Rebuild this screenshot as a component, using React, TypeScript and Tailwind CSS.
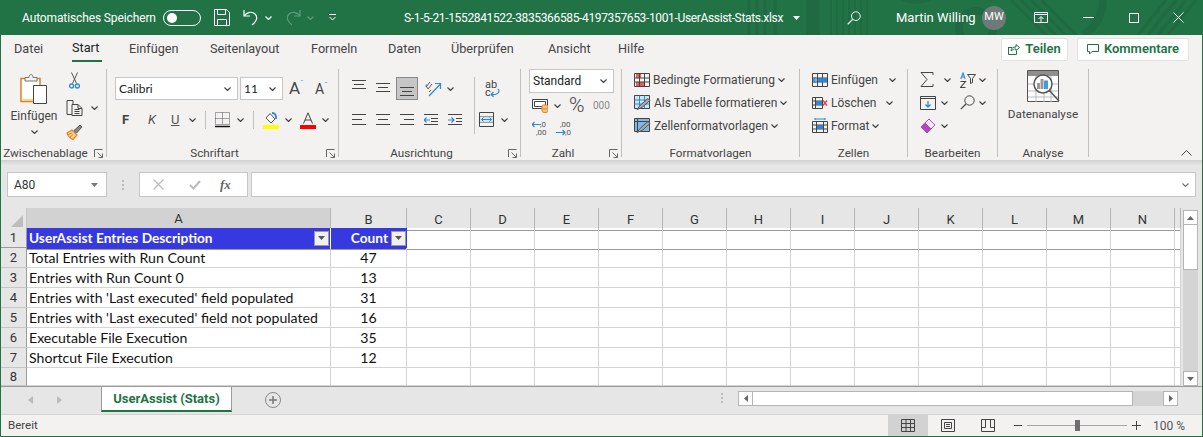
import type { ReactNode } from "react";

const ui = "font-['Roboto','Noto_Sans',sans-serif]";
const cellFont = "font-['Lato','Open_Sans',sans-serif]";

// --- small icons ---
function Chev({ className = "text-[#444]" }: { className?: string }) {
  return (
    <svg width="7" height="4" viewBox="0 0 7 4" className={`flex-none ${className}`} fill="none" stroke="currentColor" strokeWidth="1.2">
      <path d="M.5.5l3 3 3-3" />
    </svg>
  );
}

function Launcher() {
  return (
    <svg width="9" height="9" viewBox="0 0 9 9" fill="none" stroke="#666" className="flex-none">
      <path d="M.5 8V.5H8.500M3.500 3.500l4.500 4.500M8.500 4.500v4h-4" />
    </svg>
  );
}

// alignment glyph: three lines, each [from, to], starting at y offset with a fixed step
function Lines({ rows, offset = 0.5, step = 4 }: { rows: [number, number][]; offset?: number; step?: number }) {
  return (
    <svg width="14" height="17" viewBox="0 0 14 17" stroke="#444" className="flex-none">
      {rows.map(([a, b], i) => (
        <path key={i} d={`M${a} ${i * step + offset}H${b}`} />
      ))}
    </svg>
  );
}

function PasteIcon() {
  return (
    <svg width="28" height="32" viewBox="0 0 28 32" fill="none" className="flex-none">
      <path d="M1 5.500h19v23H1z" fill="#fff" stroke="#e67e22" strokeWidth="1.500" />
      <path d="M2.500 27h17" stroke="#fbd28b" strokeWidth="2" />
      <path d="M5 4.500h4c0-4 4-4 4 0h4v3.500H5z" fill="#f3f2f1" stroke="#777" />
      <path d="M13.500 12.500h13v18h-13z" fill="#fff" stroke="#444" />
    </svg>
  );
}

function CutIcon() {
  return (
    <svg width="11" height="17" viewBox="0 0 11 17" fill="none" className="flex-none">
      <path d="M2.500.5l5 11M8.500.5l-5 11" stroke="#555" />
      <circle cx="2.600" cy="14" r="2" stroke="#2b88d8" strokeWidth="1.300" />
      <circle cx="8.400" cy="14" r="2" stroke="#2b88d8" strokeWidth="1.300" />
    </svg>
  );
}

function CopyIcon() {
  return (
    <svg width="17" height="16" viewBox="0 0 17 16" fill="none" stroke="#444" className="flex-none">
      <path d="M1 .5h6v14H1z" />
      <path d="M6 4.500h6l4 4v7H6z" fill="#f3f2f1" />
      <path d="M12 4.500v4h4M8.500 9.500h5M8.500 11.500h5M8.500 13.500h5" />
    </svg>
  );
}

function BrushIcon() {
  return (
    <svg width="17" height="16" viewBox="0 0 17 16" fill="none" className="flex-none">
      <path d="M1 9l5-3 5 5-4 4.500C5 15 1.500 12 1 9z" fill="#fbd28b" stroke="#e67e22" strokeWidth="1.200" />
      <path d="M2 10.500l4-1.500M4 13l3-2.500" stroke="#e67e22" />
      <path d="M8 6.500l6-5.500 2 2-5.500 6z" fill="#888" stroke="#555" />
    </svg>
  );
}

function BorderIcon() {
  return (
    <svg width="15" height="16" viewBox="0 0 15 16" fill="none" className="flex-none">
      <path d="M.5.500h14v12H.5zM7.500.5v12M.5 6.500h14" stroke="#555" strokeDasharray="1 1" />
      <path d="M0 14.500h15" stroke="#111" strokeWidth="1.500" />
    </svg>
  );
}

function FillIcon() {
  return (
    <svg width="16" height="17" viewBox="0 0 16 17" fill="none" className="flex-none">
      <path d="M3 6l4-4.500L12 7l-4 4z" stroke="#555" fill="#fff" />
      <path d="M9 1c3 0 4.500 2 4 6" stroke="#2b88d8" strokeWidth="1.800" />
      <rect y="13" width="16" height="4" fill="#ffff00" />
    </svg>
  );
}

function FontColorIcon() {
  return (
    <svg width="16" height="17" viewBox="0 0 16 17" fill="none" className="flex-none">
      <path d="M3.500 11.500L8 .8l4.500 10.700M5 8h6" stroke="#444" />
      <rect y="13" width="16" height="4" fill="#ff0000" />
    </svg>
  );
}

function RotateIcon() {
  return (
    <svg width="17" height="16" viewBox="0 0 17 16" fill="none" className="flex-none">
      <path d="M1 6l4-5M3 8l4-5M1.500 3.500c-1 1.500 0 3 1.500 4M4 11l2-2" stroke="#555" />
      <path d="M4 15L15 3.500M10 2.500h5.500V8" stroke="#2b88d8" strokeWidth="1.200" />
    </svg>
  );
}

function IndentIcon({ flip }: { flip?: boolean }) {
  return (
    <svg width="14" height="13" viewBox="0 0 14 13" fill="none" className="flex-none">
      <path d={flip ? "M0 1.500h14M8 5.500h6M8 8.500h6M0 11.500h14" : "M0 1.500h14M7 5.500h7M7 8.500h7M0 11.500h14"} stroke="#444" />
      <path d={flip ? "M0 7h6M3.500 4.500L6 7 3.500 9.500" : "M6 7H0M2.500 4.500L0 7l2.500 2.500"} stroke="#2b88d8" strokeWidth="1.200" />
    </svg>
  );
}

function WrapIcon() {
  return (
    <svg width="16" height="18" viewBox="0 0 16 18" fill="none" className="flex-none overflow-visible">
      <text x="1" y="8" fontSize="11" fill="#444" fontFamily="Roboto">ab</text>
      <text x="1" y="16" fontSize="11" fill="#444" fontFamily="Roboto">c</text>
      <path d="M7 14.500c4 .5 8-.5 8-3.500 0-1.500-.8-2-1.500-2M7 14.500L9.500 12M7 14.500l2.500 2.200" stroke="#2b88d8" strokeWidth="1.200" />
    </svg>
  );
}

function MergeIcon() {
  return (
    <svg width="15" height="15" viewBox="0 0 15 15" fill="none" className="flex-none">
      <path d="M.5.500h14v14H.5zM.5 5h14M.5 10h14" stroke="#444" />
      <rect x="1" y="5" width="13" height="5" fill="#cfe5f6" />
      <path d="M2.500 7.500h10M4.500 5.500l-2 2 2 2M10.500 5.500l2 2-2 2" stroke="#2b88d8" />
    </svg>
  );
}

function AccountingIcon() {
  return (
    <svg width="16" height="15" viewBox="0 0 16 15" fill="none" className="flex-none">
      <path d="M.5 1.500h15v9H.5z" stroke="#444" fill="#fff" />
      <path d="M2.500 3.500h11v5h-11z" stroke="#444" />
      <path d="M10 8c0-1.500 6-1.500 6 0v5c0 2-6 2-6 0z" fill="#f6c489" stroke="#e67e22" />
      <path d="M10 10c1 1.300 5 1.300 6 0" stroke="#e67e22" />
    </svg>
  );
}

function DecimalIcon({ more }: { more?: boolean }) {
  return (
    <svg width="17" height="17" viewBox="0 0 17 17" fill="none" className="flex-none">
      <path d={more ? "M0 12.500h9M6.500 10l2.500 2.500L6.500 15" : "M9 4.500H0M2.500 2L0 4.500 2.500 7"} stroke="#2b88d8" strokeWidth="1.200" />
      <text x={more ? 4 : 8} y="7" fontSize="8" fill="#555" fontFamily="Roboto">{more ? ",00" : ",0"}</text>
      <text x={more ? 9 : 4} y="15" fontSize="8" fill="#555" fontFamily="Roboto">{more ? ",0" : ",00"}</text>
    </svg>
  );
}

function CondFormatIcon() {
  return (
    <svg width="16" height="14" viewBox="0 0 16 14" fill="none" className="flex-none">
      <rect x="2" y="1" width="5" height="4" fill="#e8605d" />
      <rect x="2" y="9" width="9" height="4" fill="#e8605d" />
      <path d="M.5.500h15v13H.5zM5.500.5v13M10.500.5v13M.5 5h15M.5 9h15" stroke="#444" />
    </svg>
  );
}

function TableFormatIcon({ full }: { full?: boolean }) {
  return (
    <svg width="17" height="15" viewBox="0 0 17 15" fill="none" className="flex-none">
      <rect x="1" y="1" width="15" height="13" fill={full ? "#7fb8e6" : "#cfe5f6"} />
      <path d="M.5.500h15v13H.5z" stroke="#444" />
      <path d={full ? "M.5 3.500h15M3.500.5v13" : "M.5 5h15M.5 9h15M5.500.5v13M10.500.5v13"} stroke={full ? "#444" : "#2b88d8"} />
      <path d="M3 14.500l3-4 8-7 2 2-8 7z" fill="#aaa" stroke="#555" />
    </svg>
  );
}

function InsertCellsIcon() {
  return (
    <svg width="16" height="14" viewBox="0 0 16 14" fill="none" className="flex-none">
      <path d="M.5.500h15v13H.5zM.5 5h15M.5 9h15M5.500.5v13M10.500.5v13" stroke="#444" />
      <rect x="6" y="5" width="9" height="4" fill="#2b88d8" />
      <path d="M8 7H1M3.500 4.500L1 7l2.500 2.500" stroke="#2b88d8" fill="none" strokeWidth="1.200" />
    </svg>
  );
}

function DeleteCellsIcon() {
  return (
    <svg width="16" height="14" viewBox="0 0 16 14" fill="none" className="flex-none">
      <path d="M.5 1.500h10v11H.5zM.5 5h10M.5 9h10M3.500 1.500v11" stroke="#444" />
      <rect x="4" y="5" width="6" height="4" fill="#2b88d8" />
      <path d="M11 4.500l4 5M15 4.500l-4 5" stroke="#e8423f" strokeWidth="1.400" />
    </svg>
  );
}

function FormatCellsIcon() {
  return (
    <svg width="16" height="15" viewBox="0 0 16 15" fill="none" className="flex-none">
      <path d="M.5 3.500h15v11H.5zM.5 7h15M.5 11h15M4.500 3.500v11M11.500 3.500v11" stroke="#444" />
      <rect x="5" y="7" width="6" height="4" fill="#2b88d8" />
      <path d="M3 1h10M3 0v2M13 0v2" stroke="#2b88d8" />
    </svg>
  );
}

function SumIcon() {
  return (
    <svg width="14" height="15" viewBox="0 0 14 15" fill="none" className="flex-none">
      <path d="M13 3V.5H1l6 7-6 7h12V12" stroke="#444" />
    </svg>
  );
}

function SortIcon() {
  return (
    <svg width="16" height="16" viewBox="0 0 16 16" fill="none" className="flex-none">
      <path d="M.8 7L3 1l2.200 6M1.600 5h2.800" stroke="#2b88d8" strokeWidth="1.100" />
      <path d="M.5 9.500h5l-5 6h5" stroke="#444" strokeWidth="1.100" />
      <path d="M7.500 2.500h8l-3 4v4l-2 1v-5z" stroke="#444" />
    </svg>
  );
}

function FillDownIcon() {
  return (
    <svg width="16" height="14" viewBox="0 0 16 14" fill="none" className="flex-none">
      <path d="M.5.500h15v13H.5z" stroke="#444" />
      <path d="M.5 2.500h15" stroke="#444" />
      <path d="M8 5v6M5.500 8.500L8 11l2.500-2.500" stroke="#2b88d8" strokeWidth="1.300" />
    </svg>
  );
}

function SearchIcon({ color = "#444", size = 15 }: { color?: string; size?: number }) {
  return (
    <svg width={size} height={size} viewBox="0 0 15 15" fill="none" className="flex-none">
      <circle cx="9.500" cy="5.500" r="4.700" stroke={color} />
      <path d="M6 9L.8 14.200" stroke={color} strokeWidth="1.200" />
    </svg>
  );
}

function EraserIcon() {
  return (
    <svg width="16" height="16" viewBox="0 0 16 16" fill="none" className="flex-none">
      <path d="M1 9l8-8 6 6-8 8z" fill="#f7eaf7" stroke="#b146c2" />
      <path d="M1 9l4-4 6 6-4 4z" fill="#b146c2" stroke="#b146c2" />
    </svg>
  );
}

function AnalyzeIcon() {
  return (
    <svg width="33" height="33" viewBox="0 0 33 33" fill="none" className="flex-none">
      <path d="M.5.500h31v31H.5z" fill="#fff" stroke="#555" />
      <rect x="1" y="1" width="30" height="5" fill="#8f8f8f" />
      <path d="M1 14h30M1 21h30M1 27h30M9 6v26M17 6v26M24 6v26" stroke="#bbb" />
      <circle cx="16" cy="14" r="9" fill="#fff" stroke="#555" strokeWidth="1.500" />
      <rect x="10" y="13" width="3" height="6" fill="#999" />
      <rect x="13.500" y="9" width="3" height="10" fill="#999" />
      <rect x="17" y="10.500" width="4" height="8.500" fill="#3f9ce0" />
      <path d="M22.500 20.500L32 31" stroke="#555" strokeWidth="1.500" />
    </svg>
  );
}

// --- ribbon group ---
function Group({ width, label, launcher, children }: { width: string; label: string; launcher?: boolean; children: ReactNode }) {
  return (
    <div className={`flex h-full flex-none ${width}`}>
      <div className="flex min-w-0 flex-1 flex-col">
        <div className="h-[84px] min-h-0">{children}</div>
        <div className="flex h-[13px] items-center text-[11.7px] leading-none text-[#444]">
          <span className="flex-1 text-center whitespace-nowrap">{label}</span>
          {launcher && (
            <span className="flex w-[16px] flex-none justify-start pl-[4px]">
              <Launcher />
            </span>
          )}
        </div>
      </div>
      <div className="mt-[6px] mb-[3px] w-px flex-none bg-[#c2c0be]" />
    </div>
  );
}

function StyleRow({ icon, label, gap = "ml-[3px]", chev = "ml-[3px]" }: { icon: ReactNode; label: string; gap?: string; chev?: string }) {
  return (
    <div className="flex h-[23px] items-center">
      {icon}
      <span className={`${gap} text-[12px] whitespace-nowrap text-[#444]`}>{label}</span>
      <span className={chev}>
        <Chev />
      </span>
    </div>
  );
}

function Ribbon() {
  return (
    <div className={`flex h-[97px] flex-none bg-[#f3f2f1] ${ui}`}>
      <Group width="w-[106px]" label="Zwischenablage" launcher>
        <div className="flex h-full">
          <div className="flex w-[65px] flex-none flex-col items-center pt-[10px] pl-[1px]">
            <PasteIcon />
            <span className="mt-[3px] text-[12px] leading-[16px] text-[#444]">Einfügen</span>
            <span className="mt-[6px]"><Chev /></span>
          </div>
          <div className="flex flex-col pt-[9px]">
            <span className="ml-[3px] h-[24px]"><CutIcon /></span>
            <span className="flex h-[24px] items-center"><CopyIcon /><span className="ml-[8px]"><Chev /></span></span>
            <span className="flex h-[24px] items-center"><BrushIcon /></span>
          </div>
        </div>
      </Group>

      <Group width="w-[232px]" label="Schriftart" launcher>
        <div className="flex flex-col pt-[14px] pl-[8px]">
          <div className="flex items-center">
            <div className={`flex h-[23px] w-[123px] items-center justify-between border border-[#c6c6c6] bg-white pr-[6px] pl-[3px] text-[12px] text-[#222] ${cellFont}`}>
              Calibri <Chev />
            </div>
            <div className={`ml-[2px] flex h-[23px] w-[43px] items-center justify-between border border-[#c6c6c6] bg-white pr-[6px] pl-[3px] text-[12px] text-[#222] ${cellFont}`}>
              11 <Chev />
            </div>
            <span className="ml-[6px] flex w-[24px] items-start text-[17px] leading-none text-[#444]">A<span className="text-[8px] leading-none text-[#2b88d8]">ˆ</span></span>
            <span className="ml-[2px] flex items-start text-[14px] leading-none text-[#444]">A<span className="text-[8px] leading-none text-[#2b88d8]">ˇ</span></span>
          </div>
          <div className="mt-[11px] flex h-[18px] items-center">
            <span className="ml-[7px] w-[26px] text-[13px] font-bold text-[#444]">F</span>
            <span className="w-[23px] text-[13px] text-[#555] italic">K</span>
            <span className="w-[18px] text-[13px] text-[#555] underline">U</span>
            <Chev />
            <span className="mx-[9px] h-[18px] w-px bg-[#c2c0be]" />
            <BorderIcon />
            <span className="ml-[7px]"><Chev /></span>
            <span className="mx-[9px] h-[18px] w-px bg-[#c2c0be]" />
            <FillIcon />
            <span className="ml-[6px]"><Chev /></span>
            <span className="ml-[8px]"><FontColorIcon /></span>
            <span className="ml-[6px]"><Chev /></span>
          </div>
        </div>
      </Group>

      <Group width="w-[182px]" label="Ausrichtung" launcher>
        <div className="flex flex-col pt-[14px] pl-[13px]">
          <div className="flex h-[23px] items-center">
            <Lines rows={[[0, 14], [2, 12], [0, 14]]} />
            <span className="ml-[10px]"><Lines offset={3.5} rows={[[0, 14], [2, 12], [0, 14]]} /></span>
            <span className="ml-[6px] flex h-[23px] w-[22px] items-center justify-center border border-[#8a8a8a] bg-[#c6c6c6]">
              <Lines offset={7.5} rows={[[0, 14], [2, 12], [0, 14]]} />
            </span>
            <span className="ml-[7px]"><RotateIcon /></span>
            <span className="ml-[5px]"><Chev /></span>
            <span className="ml-[20px] h-[57px] w-px self-start bg-[#c2c0be]" />
            <span className="ml-[9px]"><WrapIcon /></span>
          </div>
          <div className="mt-[7px] flex h-[25px] items-center">
            <Lines offset={3.5} step={5} rows={[[0, 14], [0, 10], [0, 14]]} />
            <span className="ml-[10px]"><Lines offset={3.5} step={5} rows={[[0, 14], [2, 12], [0, 14]]} /></span>
            <span className="ml-[10px]"><Lines offset={3.5} step={5} rows={[[0, 14], [4, 14], [0, 14]]} /></span>
            <span className="ml-[10px]"><IndentIcon /></span>
            <span className="ml-[10px]"><IndentIcon flip /></span>
            <span className="ml-[17px]"><MergeIcon /></span>
            <span className="ml-[7px]"><Chev /></span>
          </div>
        </div>
      </Group>

      <Group width="w-[101px]" label="Zahl" launcher>
        <div className="flex flex-col pt-[6px] pl-[8px]">
          <div className="flex h-[24px] w-[85px] items-center justify-between border border-[#c6c6c6] bg-white pr-[6px] pl-[3px] text-[12px] text-[#222]">
            Standard <Chev />
          </div>
          <div className="mt-[1px] flex h-[23px] items-center pl-[3px]">
            <AccountingIcon />
            <span className="ml-[6px]"><Chev /></span>
            <span className="ml-[8px] w-[24px] text-[21px] leading-none font-light text-[#444]">%</span>
            <span className="text-[10px] text-[#888]">000</span>
          </div>
          <div className="flex h-[22px] items-center pl-[3px]">
            <DecimalIcon />
            <span className="ml-[7px]"><DecimalIcon more /></span>
          </div>
        </div>
      </Group>

      <Group width="w-[178px]" label="Formatvorlagen">
        <div className="flex flex-col pt-[5px] pl-[12px]">
          <StyleRow icon={<CondFormatIcon />} label="Bedingte Formatierung" />
          <StyleRow icon={<TableFormatIcon />} label="Als Tabelle formatieren" />
          <StyleRow icon={<TableFormatIcon full />} label="Zellenformatvorlagen" />
        </div>
      </Group>

      <Group width="w-[108px]" label="Zellen">
        <div className="flex flex-col pt-[5px] pl-[12px]">
          <StyleRow icon={<InsertCellsIcon />} label="Einfügen" chev="ml-[11px]" />
          <StyleRow icon={<DeleteCellsIcon />} label="Löschen" chev="ml-[10px]" />
          <StyleRow icon={<FormatCellsIcon />} label="Format" />
        </div>
      </Group>

      <Group width="w-[90px]" label="Bearbeiten">
        <div className="grid grid-cols-[38px_1fr] pt-[5px] pl-[12px]">
          <span className="flex h-[23px] items-center"><SumIcon /><span className="ml-[10px]"><Chev /></span></span>
          <span className="flex h-[23px] items-center pl-[2px]"><SortIcon /><span className="ml-[3px]"><Chev /></span></span>
          <span className="flex h-[23px] items-center"><FillDownIcon /><span className="ml-[5px]"><Chev /></span></span>
          <span className="flex h-[23px] items-center pl-[2px]"><SearchIcon /><span className="ml-[4px]"><Chev /></span></span>
          <span className="flex h-[23px] items-center"><EraserIcon /><span className="ml-[5px]"><Chev /></span></span>
        </div>
      </Group>

      <Group width="w-[91px]" label="Analyse">
        <div className="flex flex-col items-center pt-[7px]">
          <AnalyzeIcon />
          <span className="mt-[3px] text-[11.7px] leading-[16px] text-[#444]">Datenanalyse</span>
        </div>
      </Group>

      <div className="flex flex-1 items-end justify-end pr-[10px] pb-[4px]">
        <svg width="11" height="6" viewBox="0 0 11 6" fill="none" stroke="#444"><path d="M.5 5.500l5-5 5 5" /></svg>
      </div>
    </div>
  );
}

// --- title bar ---
function TitleBar() {
  return (
    <div className={`relative flex h-[35px] flex-none items-center overflow-hidden bg-[#217346] text-[12px] text-white ${ui}`}>
      <svg className="absolute top-0 left-[740px]" width="461" height="35" viewBox="0 0 461 35" fill="none" stroke="#1f6a40">
        <path d="M8 0v35M16 0v35M24 0v35M34 0v35" strokeWidth="3" />
        <path d="M72 0v35" strokeWidth="13" />
        <path d="M90 0v35M96 0v35M102 0v35M108 0v35M114 0v35M120 0v35M126 0v35" strokeWidth="2" />
        <path d="M160 -6a26 26 0 0 0 30 0" strokeWidth="10" />
        <circle cx="235" cy="28" r="17" strokeWidth="8" />
        <path d="M270 0l36 36M280 0l36 36M290 0l36 36M300 0l36 36" strokeWidth="3" />
        <path d="M362 0c0 15-8 28-20 35" strokeWidth="8" />
        <path d="M425 0l-28 35M435 0l-28 35M445 0l-28 35M455 0l-28 35" strokeWidth="3" />
      </svg>
      <div className="relative flex w-full items-center">
        <span className="ml-[21px] w-[141px] flex-none tracking-[-0.12px] whitespace-nowrap">Automatisches Speichern</span>
        <span className="flex h-[16px] w-[38px] flex-none items-center rounded-full border border-white pl-[3px]">
          <span className="h-[10px] w-[10px] rounded-full bg-white" />
        </span>
        <svg className="ml-[13px] flex-none" width="16" height="17" viewBox="0 0 16 17" fill="none" stroke="#fff">
          <path d="M.5.500h12l3 3v13H.5zM3.500.5v5h8v-5M3.500 16.500v-6h9v6" />
        </svg>
        <svg className="ml-[13px] flex-none" width="16" height="17" viewBox="0 0 16 17" fill="none" stroke="#fff" strokeWidth="1.200">
          <path d="M1 1v6h6M1 7c3-4 8-5 11-2 3 3 2 7-3 11" />
        </svg>
        <span className="ml-[6px]"><Chev className="text-white" /></span>
        <svg className="ml-[13px] flex-none" width="16" height="17" viewBox="0 0 16 17" fill="none" stroke="#5f9b7d" strokeWidth="1.200">
          <path d="M15 1v6H9M15 7c-3-4-8-5-11-2-3 3-2 7 3 11" />
        </svg>
        <span className="ml-[6px]"><Chev className="text-[#5f9b7d]" /></span>
        <svg className="ml-[15px] flex-none" width="7" height="7" viewBox="0 0 7 7" fill="none" stroke="#fff">
          <path d="M0 .5h7M.5 3l3 3 3-3" />
        </svg>
        <span className="ml-[68px] w-[383px] flex-none tracking-[-0.35px] whitespace-nowrap">S-1-5-21-1552841522-3835366585-4197357653-1001-UserAssist-Stats.xlsx</span>
        <svg className="ml-[6px] flex-none" width="7" height="4" viewBox="0 0 7 4" fill="#fff"><path d="M0 0h7L3.500 4z" /></svg>
        <span className="ml-[47px]"><SearchIcon color="#fff" size={14} /></span>
        <span className="ml-[35px] w-[86px] flex-none whitespace-nowrap text-[13px]">Martin Willing</span>
        <span className="flex h-[24px] w-[24px] flex-none items-center justify-center rounded-full bg-[#6d7b78] text-[11px]">MW</span>
        <svg className="ml-[28px] flex-none" width="14" height="11" viewBox="0 0 14 11" fill="none" stroke="#fff">
          <path d="M.5.500h13v10H.5zM.5 2.500h13M7 10V5M4.500 7L7 4.500 9.500 7" />
        </svg>
        <span className="ml-[35px] h-px w-[11px] flex-none bg-white" />
        <span className="ml-[35px] h-[10px] w-[10px] flex-none border border-white" />
        <svg className="ml-[34px] flex-none" width="11" height="11" viewBox="0 0 11 11" stroke="#fff"><path d="M.5.500l10 10M10.500.5l-10 10" /></svg>
      </div>
    </div>
  );
}

const tabs = [
  { label: "Datei", width: "w-[58px]" },
  { label: "Start", width: "w-[57px]" },
  { label: "Einfügen", width: "w-[81px]" },
  { label: "Seitenlayout", width: "w-[101px]" },
  { label: "Formeln", width: "w-[77px]" },
  { label: "Daten", width: "w-[63px]" },
  { label: "Überprüfen", width: "w-[97px]" },
  { label: "Ansicht", width: "w-[70px]" },
  { label: "Hilfe", width: "w-[40px]" },
];

function TabStrip() {
  return (
    <div className={`flex h-[28px] flex-none items-center bg-[#f3f2f1] pl-[13px] text-[12.7px] text-[#444] ${ui}`}>
      {tabs.map((t) => (
        <div key={t.label} className={`flex h-full flex-none items-center ${t.width}`}>
          {t.label === "Start" ? (
            <span className="flex h-full flex-col items-start justify-center pt-[2px]">
              <span className="text-[#222]">{t.label}</span>
              <span className="mt-[2px] h-[2px] w-[30px] bg-[#217346]" />
            </span>
          ) : (
            t.label
          )}
        </div>
      ))}
      <div className="ml-auto flex items-center pr-[13px] text-[13px] font-semibold text-[#217346]">
        <button className="flex h-[23px] w-[67px] items-center justify-center gap-[5px] rounded-[2px] border border-[#e4e2e0] bg-white">
          <svg width="12" height="12" viewBox="0 0 12 12" fill="none" stroke="#217346">
            <path d="M1 4.500h3M.5 4v7.500h8V8M3 8c0-3 2-4 5-4V1.500l3.500 3-3.500 3V6c-2 0-3.500.5-5 2z" />
          </svg>
          Teilen
        </button>
        <button className="ml-[9px] flex h-[23px] w-[112px] items-center justify-center gap-[5px] rounded-[2px] border border-[#e4e2e0] bg-white">
          <svg width="12" height="11" viewBox="0 0 12 11" fill="none" stroke="#217346">
            <path d="M.5.500h11v7H5L2.500 10V7.500h-2z" />
          </svg>
          Kommentare
        </button>
      </div>
    </div>
  );
}

function FormulaBar() {
  return (
    <div className={`flex h-[48px] flex-none flex-col bg-[#e6e6e6] ${ui}`}>
      <div className="h-[5px] flex-none bg-gradient-to-b from-[#cfcfcf] to-[#e6e6e6]" />
      <div className="mt-[7px] flex h-[25px] items-stretch pr-[6px] pl-[6px]">
        <div className="flex w-[100px] flex-none items-center justify-between border border-[#c6c6c6] bg-white pr-[8px] pl-[6px] text-[12px] text-[#333]">
          A80
          <svg width="7" height="4" viewBox="0 0 7 4" fill="#777"><path d="M0 0h7L3.500 4z" /></svg>
        </div>
        <div className="flex w-[32px] flex-none flex-col items-center justify-center gap-[2px]">
          <span className="h-[2px] w-[2px] bg-[#bbb]" />
          <span className="h-[2px] w-[2px] bg-[#bbb]" />
          <span className="h-[2px] w-[2px] bg-[#bbb]" />
        </div>
        <div className="flex w-[109px] flex-none items-center border border-[#c6c6c6] bg-white pl-[13px]">
          <svg width="11" height="11" viewBox="0 0 11 11" stroke="#bbb" strokeWidth="1.200"><path d="M.5.500l10 10M10.500.5l-10 10" /></svg>
          <svg className="ml-[25px]" width="12" height="10" viewBox="0 0 12 10" fill="none" stroke="#bbb" strokeWidth="2"><path d="M1 5l3.500 3.500L11 1" /></svg>
          <span className="ml-[19px] font-['Liberation_Serif',serif] text-[13px] font-bold text-[#666] italic">fx</span>
        </div>
        <div className="ml-[3px] flex flex-1 items-center justify-end border border-[#c6c6c6] bg-white pr-[6px]">
          <Chev className="text-[#777]" />
        </div>
      </div>
    </div>
  );
}

// --- sheet ---
const columns = ["A", "B", "C", "D", "E", "F", "G", "H", "I", "J", "K", "L", "M", "N", ""];
const gridCols = "grid grid-cols-[26px_304px_76px_repeat(12,64px)_6px]";

const rows: [string, string][] = [
  ["Total Entries with Run Count", "47"],
  ["Entries with Run Count 0", "13"],
  ["Entries with 'Last executed' field populated", "31"],
  ["Entries with 'Last executed' field not populated", "16"],
  ["Executable File Execution", "35"],
  ["Shortcut File Execution", "12"],
  ["", ""],
];

function FilterButton() {
  return (
    <span className="flex h-[15px] w-[15px] flex-none items-center justify-center border border-[#9a9a9a] bg-[#f0f0f0]">
      <svg width="7" height="4" viewBox="0 0 7 4" fill="#555"><path d="M0 0h7L3.500 4z" /></svg>
    </span>
  );
}

function RowHead({ n, h = "h-[20px]", dark }: { n: number; h?: string; dark?: boolean }) {
  return (
    <div className={`flex ${h} items-center justify-center border-r border-b bg-[#e6e6e6] text-[13px] text-[#333] ${ui} border-r-[#9b9b9b] ${dark ? "border-b-[#9b9b9b]" : "border-b-[#c6c6c6]"}`}>
      {n}
    </div>
  );
}

function Sheet() {
  return (
    <div className="flex h-[178px] flex-none bg-[#e6e6e6]">
      <div className="w-[1180px] flex-none">
        <div className={`${gridCols} h-[20px]`}>
          <div className="flex items-end justify-end border-r border-b border-r-[#c6c6c6] border-b-[#9b9b9b] pr-[3px] pb-[3px]">
            <svg width="12" height="12" viewBox="0 0 12 12" fill="#bdbdbd"><path d="M12 0v12H0z" /></svg>
          </div>
          {columns.map((c) => (
            <div
              key={c || "end"}
              className={`flex items-center justify-center border-r pt-[1px] text-[13px] text-[#333] ${ui} ${
                c === "A" ? "border-b-2 border-r-[#b5b5b5] border-b-[#217346] bg-[#d2d2d2]" : "border-b border-r-[#b5b5b5] border-b-[#9b9b9b]"
              }`}
            >
              {c}
            </div>
          ))}
        </div>

        <div className={`${gridCols} h-[20px] bg-white ${cellFont}`}>
          <RowHead n={1} dark />
          <div className="flex items-center justify-between border-r border-b border-r-white border-b-[#9b9b9b] bg-[#3639e0] pr-[1px] pl-[2px] text-[13.7px] font-bold text-white">
            UserAssist Entries Description
            <FilterButton />
          </div>
          <div className="flex items-center justify-end border-b border-b-[#9b9b9b] bg-[#3639e0] pr-[1px] text-[13.7px] font-bold text-white">
            Count
            <span className="ml-[3px]"><FilterButton /></span>
          </div>
          {columns.slice(2).map((c) => (
            <div key={c || "end"} className="border-r border-b border-r-[#d4d4d4] border-b-[#9b9b9b]" />
          ))}
        </div>

        {rows.map(([text, count], i) => (
          <div key={i} className={`${gridCols} bg-white ${cellFont} ${i === 6 ? "h-[18px]" : "h-[20px]"}`}>
            <RowHead n={i + 2} h={i === 6 ? "h-[18px]" : "h-[20px]"} />
            <div className="flex items-start overflow-hidden border-r border-b border-[#d4d4d4] pt-[2px] pl-[2px] text-[14.1px] leading-[15px] whitespace-nowrap text-[#111]">{text}</div>
            <div className="flex items-start justify-center border-r border-b border-[#d4d4d4] pt-[2px] text-[14.1px] leading-[15px] text-[#111]">{count}</div>
            {columns.slice(2).map((c) => (
              <div key={c || "end"} className="border-r border-b border-[#d4d4d4]" />
            ))}
          </div>
        ))}
      </div>

      <div className="flex w-[21px] flex-none justify-end pt-[2px] pr-[4px]">
        <div className="flex h-[176px] w-[15px] flex-col bg-[#d4d4d4]">
          <div className="flex h-[15px] flex-none items-center justify-center border border-[#b5b5b5] bg-white">
            <svg width="7" height="4" viewBox="0 0 7 4" fill="#666"><path d="M3.500 0L7 4H0z" /></svg>
          </div>
          <div className="h-[45px] flex-none border border-t-0 border-[#b5b5b5] bg-white" />
          <div className="flex-1" />
          <div className="flex h-[15px] flex-none items-center justify-center border border-[#b5b5b5] bg-white">
            <svg width="7" height="4" viewBox="0 0 7 4" fill="#666"><path d="M0 0h7L3.500 4z" /></svg>
          </div>
        </div>
      </div>
    </div>
  );
}

function SheetTabs() {
  return (
    <div className={`flex h-[28px] flex-none border-t border-[#9b9b9b] bg-[#e6e6e6] ${ui}`}>
      <div className="flex w-[100px] flex-none items-center pb-[2px] pl-[27px]">
        <svg width="5" height="8" viewBox="0 0 5 8" fill="#bbb"><path d="M5 0v8L0 4z" /></svg>
        <svg className="ml-[24px]" width="5" height="8" viewBox="0 0 5 8" fill="#bbb"><path d="M0 0v8l5-4z" /></svg>
      </div>
      <div className="flex h-[25px] w-[131px] flex-none items-center justify-center border-x border-b-2 border-x-[#9b9b9b] border-b-[#217346] bg-white text-[13px] font-bold text-[#217346]">
        UserAssist (Stats)
      </div>
      <div className="ml-[33px] flex h-[25px] items-center">
        <span className="flex h-[16px] w-[16px] items-center justify-center rounded-full border-[1.5px] border-[#8a8a8a]">
          <svg width="8" height="8" viewBox="0 0 8 8" stroke="#777" strokeWidth="1.500"><path d="M4 0v8M0 4h8" /></svg>
        </span>
      </div>
      <div className="ml-auto flex h-[22px] items-center pr-[24px]">
        <span className="mr-[15px] flex flex-col gap-[2px]">
          <span className="h-[2px] w-[2px] bg-[#bbb]" />
          <span className="h-[2px] w-[2px] bg-[#bbb]" />
          <span className="h-[2px] w-[2px] bg-[#bbb]" />
        </span>
        <div className="flex h-[15px] w-[440px] bg-[#d4d4d4]">
          <span className="flex w-[15px] flex-none items-center justify-center border border-[#b5b5b5] bg-white">
            <svg width="4" height="7" viewBox="0 0 4 7" fill="#666"><path d="M4 0v7L0 3.500z" /></svg>
          </span>
          <span className="w-[380px] flex-none border-y border-r border-[#b5b5b5] bg-white" />
          <span className="ml-auto flex w-[15px] flex-none items-center justify-center border border-[#b5b5b5] bg-white">
            <svg width="4" height="7" viewBox="0 0 4 7" fill="#666"><path d="M0 0v7l4-3.500z" /></svg>
          </span>
        </div>
      </div>
    </div>
  );
}

function StatusBar() {
  return (
    <div className={`flex h-[22px] flex-none items-center border-t border-[#d4d4d4] bg-[#f3f2f1] pl-[7px] text-[11.5px] text-[#444] ${ui}`}>
      Bereit
      <div className="ml-auto flex h-full items-center">
        <span className="flex h-full w-[40px] items-center justify-center bg-[#d2d2d2]">
          <svg width="14" height="13" viewBox="0 0 14 13" fill="none" stroke="#444">
            <path d="M.5.500h13v12H.5zM.5 4.500h13M.5 8.500h13M5 .5v12M9.500.5v12" />
          </svg>
        </span>
        <span className="flex w-[40px] items-center justify-center">
          <svg width="14" height="13" viewBox="0 0 14 13" fill="none" stroke="#444">
            <path d="M.5.500h13v12H.5zM3.500 3.500h7v6h-7zM5 5.500h4M5 7.500h4" />
          </svg>
        </span>
        <span className="flex w-[40px] items-center justify-center">
          <svg width="14" height="13" viewBox="0 0 14 13" fill="none" stroke="#444">
            <path d="M.5.500h13v12H.5zM.5 8.500h4V.5M9.500.5v8h4" />
          </svg>
        </span>
        <span className="ml-[6px] h-px w-[8px] bg-[#444]" />
        <div className="ml-[5px] flex h-[10px] w-[100px] items-center">
          <span className="h-px w-[48px] bg-[#a5a5a5]" />
          <span className="h-[11px] w-[5px] bg-[#6f6f6f]" />
          <span className="h-px flex-1 bg-[#a5a5a5]" />
        </div>
        <svg className="ml-[5px]" width="9" height="9" viewBox="0 0 9 9" stroke="#444"><path d="M4.500 0v9M0 4.500h9" /></svg>
        <span className="ml-[12px] w-[49px] flex-none whitespace-nowrap text-[12px] text-[#555]">100 %</span>
      </div>
    </div>
  );
}

export default function App() {
  return (
    <div className="flex h-[437px] w-[1203px] flex-col overflow-hidden border-x border-b border-[#217346] bg-[#e6e6e6]">
      <TitleBar />
      <TabStrip />
      <Ribbon />
      <FormulaBar />
      <Sheet />
      <SheetTabs />
      <StatusBar />
    </div>
  );
}
